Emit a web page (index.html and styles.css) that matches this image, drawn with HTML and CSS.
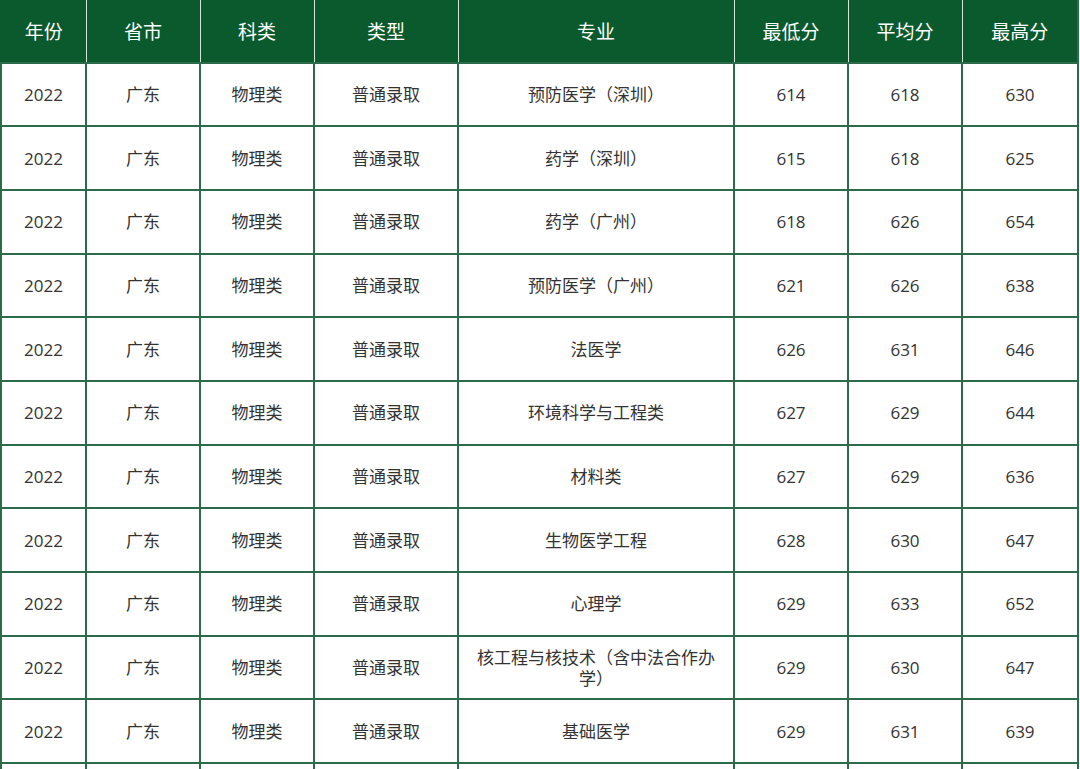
FILE: index.html
```html
<!DOCTYPE html>
<html lang="zh">
<head>
<meta charset="utf-8">
<title>录取分数</title>
<link rel="stylesheet" href="styles.css">
</head>
<body>
<table class="scores">
<colgroup>
<col class="c-year"><col class="c-prov"><col class="c-subj"><col class="c-type"><col class="c-major"><col class="c-num"><col class="c-num"><col class="c-last">
</colgroup>
<thead>
<tr><th>年份</th><th>省市</th><th>科类</th><th>类型</th><th>专业</th><th>最低分</th><th>平均分</th><th>最高分</th></tr>
</thead>
<tbody>
<tr><td>2022</td><td>广东</td><td>物理类</td><td>普通录取</td><td>预防医学（深圳）</td><td>614</td><td>618</td><td>630</td></tr>
<tr><td>2022</td><td>广东</td><td>物理类</td><td>普通录取</td><td>药学（深圳）</td><td>615</td><td>618</td><td>625</td></tr>
<tr><td>2022</td><td>广东</td><td>物理类</td><td>普通录取</td><td>药学（广州）</td><td>618</td><td>626</td><td>654</td></tr>
<tr><td>2022</td><td>广东</td><td>物理类</td><td>普通录取</td><td>预防医学（广州）</td><td>621</td><td>626</td><td>638</td></tr>
<tr><td>2022</td><td>广东</td><td>物理类</td><td>普通录取</td><td>法医学</td><td>626</td><td>631</td><td>646</td></tr>
<tr><td>2022</td><td>广东</td><td>物理类</td><td>普通录取</td><td>环境科学与工程类</td><td>627</td><td>629</td><td>644</td></tr>
<tr><td>2022</td><td>广东</td><td>物理类</td><td>普通录取</td><td>材料类</td><td>627</td><td>629</td><td>636</td></tr>
<tr><td>2022</td><td>广东</td><td>物理类</td><td>普通录取</td><td>生物医学工程</td><td>628</td><td>630</td><td>647</td></tr>
<tr><td>2022</td><td>广东</td><td>物理类</td><td>普通录取</td><td>心理学</td><td>629</td><td>633</td><td>652</td></tr>
<tr><td>2022</td><td>广东</td><td>物理类</td><td>普通录取</td><td>核工程与核技术（含中法合作办学）</td><td>629</td><td>630</td><td>647</td></tr>
<tr><td>2022</td><td>广东</td><td>物理类</td><td>普通录取</td><td>基础医学</td><td>629</td><td>631</td><td>639</td></tr>
<tr class="next"><td></td><td></td><td></td><td></td><td></td><td></td><td></td><td></td></tr>
</tbody>
</table>
</body>
</html>
```
FILE: styles.css
```css
html, body {
  margin: 0;
  padding: 0;
  background: #ffffff;
}
.scores {
  width: 1077px;
  table-layout: fixed;
  border-collapse: collapse;
  font-family: "Open Sans", "Noto Sans CJK SC", sans-serif;
  color: #333333;
}
.c-year { width: 85px; }
.c-prov { width: 114px; }
.c-subj { width: 114px; }
.c-type { width: 144px; }
.c-major { width: 276px; }
.c-num { width: 114px; }
.c-last { width: 116px; }
.scores th {
  height: 61.5px;
  background: #0b5a2e;
  color: #ffffff;
  font-weight: normal;
  font-size: 19px;
  border: 1px solid #d6e4da;
  border-top: none;
  border-bottom: 2px solid #2c6b4a;
  padding: 0 6px;
  text-align: center;
}
.scores th:first-child { border-left: 2px solid #0b5a2e; }
.scores th:last-child { border-right: 2px solid #2c6b4a; }
.scores td {
  height: 61.7px;
  font-size: 17px;
  line-height: 21px;
  border: 2px solid #2c6b4a;
  padding: 0 14px;
  text-align: center;
  vertical-align: middle;
}
```
